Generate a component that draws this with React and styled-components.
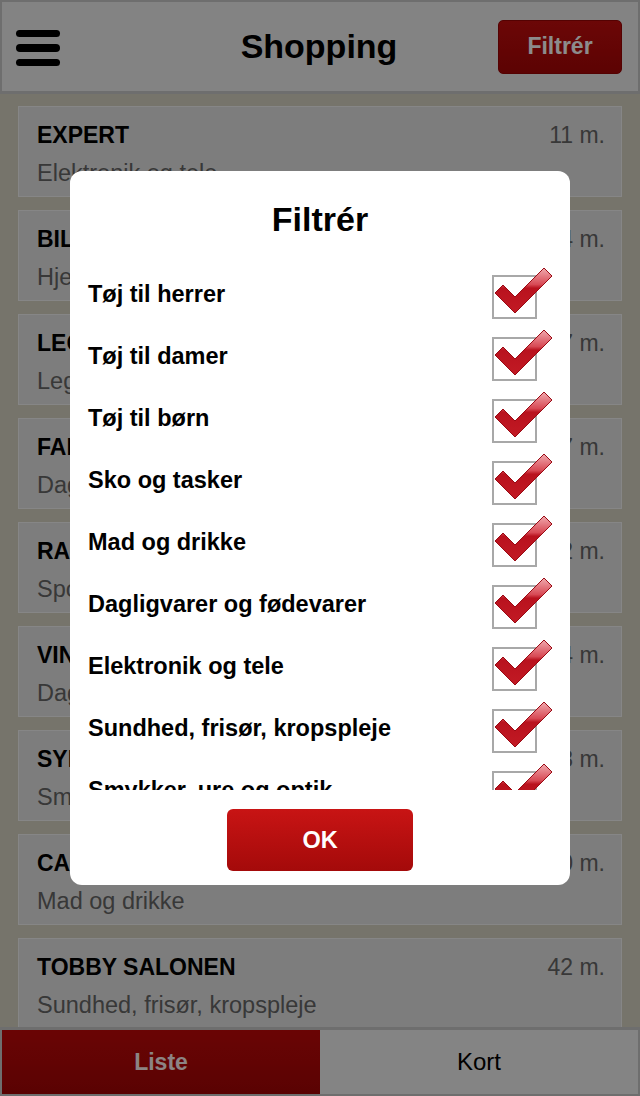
import React from 'react'
import styled, { createGlobalStyle } from 'styled-components'

const GlobalStyle = createGlobalStyle`
  html, body {
    margin: 0;
    padding: 0;
  }
  body {
    background: #d8d3c3;
    font-family: "Liberation Sans", Arial, sans-serif;
  }
  * {
    box-sizing: border-box;
  }
`

const Screen = styled.div`
  background: #d8d3c3;
  display: flex;
  flex-direction: column;
  height: 1096px;
  overflow: hidden;
  position: relative;
  width: 640px;
`

const Header = styled.header`
  align-items: center;
  background: #eeeeee;
  border: 2px solid #c8c8c8;
  border-bottom-width: 3px;
  display: grid;
  flex-shrink: 0;
  grid-template-columns: 1fr auto 1fr;
  height: 94px;
  padding: 0 16px 0 14px;

  h1 {
    color: #000;
    font-size: 34px;
    font-weight: bold;
    margin: 0;
  }
`

const Burger = styled.div`
  display: flex;
  flex-direction: column;
  gap: 7px;
  margin-top: 3px;
  width: 44px;

  span {
    background: #000;
    border-radius: 4px;
    display: block;
    height: 7.5px;
  }
`

const HeaderButton = styled.button`
  background: linear-gradient(#c40d0d, #a80606);
  border: 1px solid #9a0505;
  border-radius: 5px;
  color: #ffffff;
  font-family: inherit;
  font-size: 23px;
  font-weight: bold;
  height: 54px;
  justify-self: end;
  padding: 0;
  width: 124px;
`

const List = styled.div`
  display: flex;
  flex: 1;
  flex-direction: column;
  gap: 13px;
  overflow: hidden;
  padding: 12px 18px 0;
`

const Card = styled.div`
  background: #e4e4e4;
  border: 1px solid #f4f4f4;
  flex-shrink: 0;
  height: 91px;
  padding: 13px 16px 0 18px;
`

const CardTop = styled.div`
  align-items: baseline;
  display: flex;
  justify-content: space-between;
  line-height: 30px;
`

const Name = styled.span`
  color: #000;
  font-size: 23px;
  font-weight: bold;
`

const Distance = styled.span`
  color: #666;
  font-size: 23px;
`

const Category = styled.div`
  color: #666;
  font-size: 23.5px;
  line-height: 30px;
  margin-top: 8px;
  white-space: nowrap;
`

const TabBar = styled.nav`
  background: #f0f0f0;
  border: 2px solid #c8c8c8;
  border-top-width: 3px;
  display: grid;
  flex-shrink: 0;
  grid-template-columns: 318px 1fr;
  height: 69px;
`

const Tab = styled.div`
  align-items: center;
  background: ${p => p.active ? 'linear-gradient(#c10909, #a40505)' : 'transparent'};
  color: ${p => p.active ? '#fff0f0' : '#000'};
  display: flex;
  font-size: ${p => p.active ? '23px' : '24px'};
  font-weight: ${p => p.active ? 'bold' : 'normal'};
  justify-content: center;
`

const Overlay = styled.div`
  background: rgba(0, 0, 0, 0.45);
  display: flex;
  inset: 0;
  justify-content: center;
  padding-top: 171px;
  position: absolute;
`

const Modal = styled.div`
  align-items: center;
  background: #fff;
  border-radius: 12px;
  display: flex;
  flex-direction: column;
  height: 714px;
  padding: 28px 0 14px;
  width: 500px;

  h2 {
    color: #000;
    font-size: 34px;
    font-weight: bold;
    line-height: 40px;
    margin: 0;
  }
`

const Options = styled.div`
  align-self: stretch;
  height: 532px;
  margin: 19px 0;
  overflow: hidden;
  padding-top: 8px;
`

const Option = styled.div`
  align-items: center;
  display: flex;
  height: 62px;
  justify-content: space-between;
  padding: 0 33px 0 18px;
`

const Label = styled.span`
  color: #000;
  font-size: 23.5px;
  font-weight: bold;
  padding-bottom: 6px;
  white-space: nowrap;
`

const Box = styled.div`
  background: #fff;
  border: 2px solid #a8a8a8;
  flex-shrink: 0;
  height: 44px;
  position: relative;
  width: 45px;

  svg {
    left: -2px;
    overflow: visible;
    position: absolute;
    top: -12px;
  }
`

const OkButton = styled.button`
  background: linear-gradient(#c81414, #a40a0a);
  border: none;
  border-radius: 6px;
  color: #fff;
  flex-shrink: 0;
  font-family: inherit;
  font-size: 23.5px;
  font-weight: bold;
  height: 62px;
  padding: 0;
  width: 186px;
`

const shops = [
  { name: 'EXPERT', cat: 'Elektronik og tele', dist: '11 m.' },
  { name: 'BILKA', cat: 'Hjem og have', dist: '14 m.' },
  { name: 'LEGEKÆDEN', cat: 'Legetøj', dist: '17 m.' },
  { name: 'FAKTA', cat: 'Dagligvarer og fødevarer', dist: '17 m.' },
  { name: 'RASMUS SPORT', cat: 'Sport og fritid', dist: '22 m.' },
  { name: 'VINBODEN', cat: 'Dagligvarer og fødevarer', dist: '24 m.' },
  { name: 'SYNOPTIK', cat: 'Smykker, ure og optik', dist: '28 m.' },
  { name: 'CAFÉ VIVALDI', cat: 'Mad og drikke', dist: '30 m.' },
  { name: 'TOBBY SALONEN', cat: 'Sundhed, frisør, kropspleje', dist: '42 m.' },
]

const filters = [
  'Tøj til herrer',
  'Tøj til damer',
  'Tøj til børn',
  'Sko og tasker',
  'Mad og drikke',
  'Dagligvarer og fødevarer',
  'Elektronik og tele',
  'Sundhed, frisør, kropspleje',
  'Smykker, ure og optik',
]

const Check = () => (
  <svg width="66" height="52" viewBox="0 -10 66 52">
    <defs>
      <linearGradient id="tick" x1="0" y1="-8" x2="0" y2="38" gradientUnits="userSpaceOnUse">
        <stop offset="0" stopColor="#f2b0b4" />
        <stop offset="0.38" stopColor="#d84a55" />
        <stop offset="0.46" stopColor="#b9121e" />
        <stop offset="1" stopColor="#c21a24" />
      </linearGradient>
    </defs>
    <polygon
      points="3,18 23,38 60,1 52,-7 23,22 11,10"
      fill="url(#tick)"
      stroke="#9a0a14"
      strokeWidth="1"
      strokeLinejoin="miter"
    />
  </svg>
)

const App = () => (
  <>
    <GlobalStyle />
    <Screen>
      <Header>
        <Burger><span /><span /><span /></Burger>
        <h1>Shopping</h1>
        <HeaderButton>Filtrér</HeaderButton>
      </Header>
      <List>
        { shops.map(s => (
          <Card key={ s.name }>
            <CardTop>
              <Name>{ s.name }</Name>
              <Distance>{ s.dist }</Distance>
            </CardTop>
            <Category>{ s.cat }</Category>
          </Card>
        )) }
      </List>
      <TabBar>
        <Tab active>Liste</Tab>
        <Tab>Kort</Tab>
      </TabBar>
      <Overlay>
        <Modal>
          <h2>Filtrér</h2>
          <Options>
            { filters.map(f => (
              <Option key={ f }>
                <Label>{ f }</Label>
                <Box><Check /></Box>
              </Option>
            )) }
          </Options>
          <OkButton>OK</OkButton>
        </Modal>
      </Overlay>
    </Screen>
  </>
)

export default App
